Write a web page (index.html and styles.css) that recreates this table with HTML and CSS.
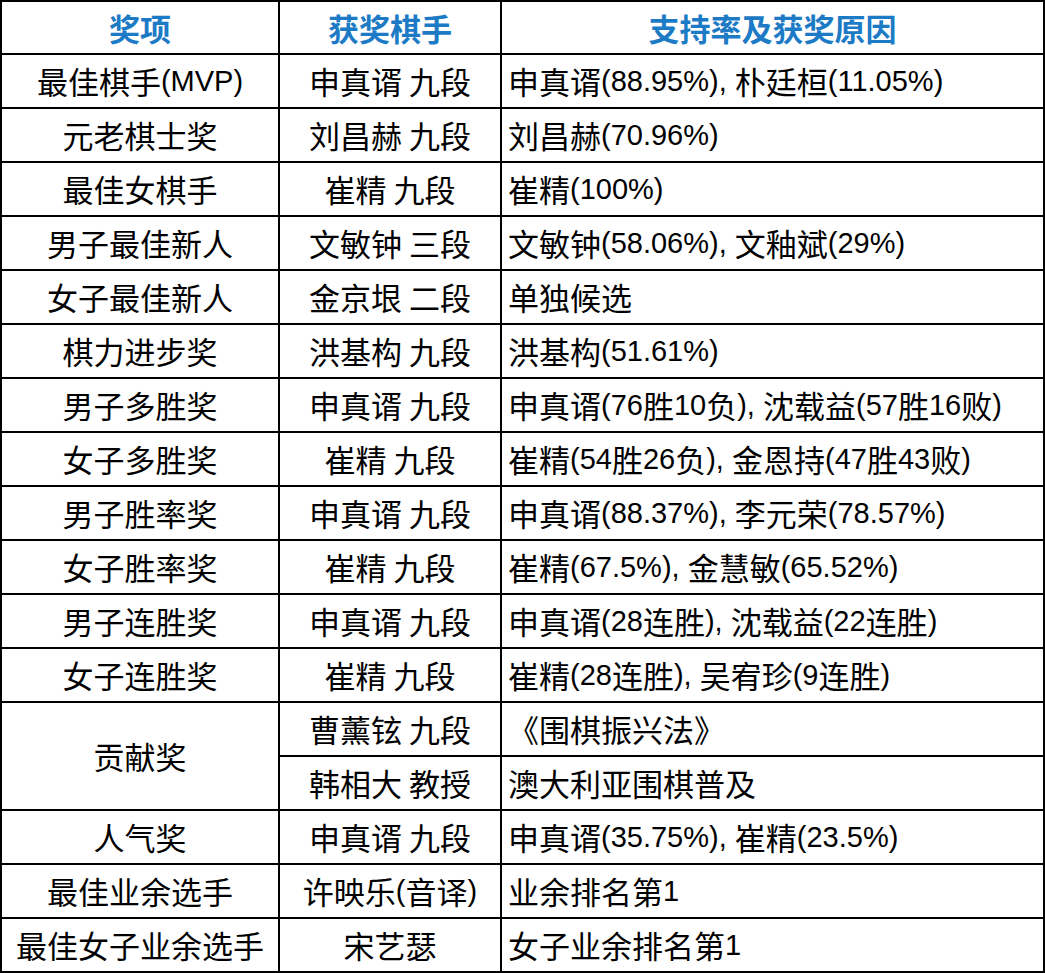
FILE: index.html
```html
<!DOCTYPE html>
<html lang="zh-CN">
<head>
<meta charset="utf-8">
<title>奖项</title>
<link rel="stylesheet" href="styles.css">
</head>
<body>
<div class="table">
  <div class="cell head">奖项</div>
  <div class="cell head">获奖棋手</div>
  <div class="cell head">支持率及获奖原因</div>

  <div class="cell c">最佳棋手<span class="en">(MVP)</span></div>
  <div class="cell c">申真谞 九段</div>
  <div class="cell l">申真谞<span class="en">(88.95%), </span>朴廷桓<span class="en">(11.05%)</span></div>

  <div class="cell c">元老棋士奖</div>
  <div class="cell c">刘昌赫 九段</div>
  <div class="cell l">刘昌赫<span class="en">(70.96%)</span></div>

  <div class="cell c">最佳女棋手</div>
  <div class="cell c">崔精 九段</div>
  <div class="cell l">崔精<span class="en">(100%)</span></div>

  <div class="cell c">男子最佳新人</div>
  <div class="cell c">文敏钟 三段</div>
  <div class="cell l">文敏钟<span class="en">(58.06%), </span>文釉斌<span class="en">(29%)</span></div>

  <div class="cell c">女子最佳新人</div>
  <div class="cell c">金京垠 二段</div>
  <div class="cell l">单独候选</div>

  <div class="cell c">棋力进步奖</div>
  <div class="cell c">洪基构 九段</div>
  <div class="cell l">洪基构<span class="en">(51.61%)</span></div>

  <div class="cell c">男子多胜奖</div>
  <div class="cell c">申真谞 九段</div>
  <div class="cell l">申真谞<span class="en">(76</span>胜<span class="en">10</span>负<span class="en">), </span>沈载益<span class="en">(57</span>胜<span class="en">16</span>败<span class="en">)</span></div>

  <div class="cell c">女子多胜奖</div>
  <div class="cell c">崔精 九段</div>
  <div class="cell l">崔精<span class="en">(54</span>胜<span class="en">26</span>负<span class="en">), </span>金恩持<span class="en">(47</span>胜<span class="en">43</span>败<span class="en">)</span></div>

  <div class="cell c">男子胜率奖</div>
  <div class="cell c">申真谞 九段</div>
  <div class="cell l">申真谞<span class="en">(88.37%), </span>李元荣<span class="en">(78.57%)</span></div>

  <div class="cell c">女子胜率奖</div>
  <div class="cell c">崔精 九段</div>
  <div class="cell l">崔精<span class="en">(67.5%), </span>金慧敏<span class="en">(65.52%)</span></div>

  <div class="cell c">男子连胜奖</div>
  <div class="cell c">申真谞 九段</div>
  <div class="cell l">申真谞<span class="en">(28</span>连胜<span class="en">), </span>沈载益<span class="en">(22</span>连胜<span class="en">)</span></div>

  <div class="cell c">女子连胜奖</div>
  <div class="cell c">崔精 九段</div>
  <div class="cell l">崔精<span class="en">(28</span>连胜<span class="en">), </span>吴宥珍<span class="en">(9</span>连胜<span class="en">)</span></div>

  <div class="cell c span2">贡献奖</div>
  <div class="cell c">曹薰铉 九段</div>
  <div class="cell l">《围棋振兴法》</div>
  <div class="cell c">韩相大 教授</div>
  <div class="cell l">澳大利亚围棋普及</div>

  <div class="cell c">人气奖</div>
  <div class="cell c">申真谞 九段</div>
  <div class="cell l">申真谞<span class="en">(35.75%), </span>崔精<span class="en">(23.5%)</span></div>

  <div class="cell c">最佳业余选手</div>
  <div class="cell c">许映乐<span class="en">(</span>音译<span class="en">)</span></div>
  <div class="cell l">业余排名第<span class="en">1</span></div>

  <div class="cell c">最佳女子业余选手</div>
  <div class="cell c">宋艺瑟</div>
  <div class="cell l">女子业余排名第<span class="en">1</span></div>
</div>
</body>
</html>
```
FILE: styles.css
```css
html, body {
  margin: 0;
  padding: 0;
  background: #fff;
}
.table {
  width: 1045px;
  height: 973px;
  box-sizing: border-box;
  display: grid;
  grid-template-columns: 276px 220px 541px;
  grid-template-rows: 51px repeat(17, 52px);
  gap: 2px;
  padding: 2px;
  background: #000;
  font-family: "Noto Sans CJK SC", "Liberation Sans", sans-serif;
  font-size: 31px;
  color: #000;
}
.cell {
  background: #fff;
  display: flex;
  align-items: center;
  white-space: pre;
  overflow: hidden;
  line-height: 1.2;
}
.en {
  font-family: "Liberation Sans", sans-serif;
  font-size: 29px;
}
.head {
  justify-content: center;
  color: #1d7bc6;
  font-weight: bold;
  font-size: 31px;
}
.c {
  justify-content: center;
}
.l {
  justify-content: flex-start;
  padding-left: 6px;
}
.span2 {
  grid-row: span 2;
}
```
